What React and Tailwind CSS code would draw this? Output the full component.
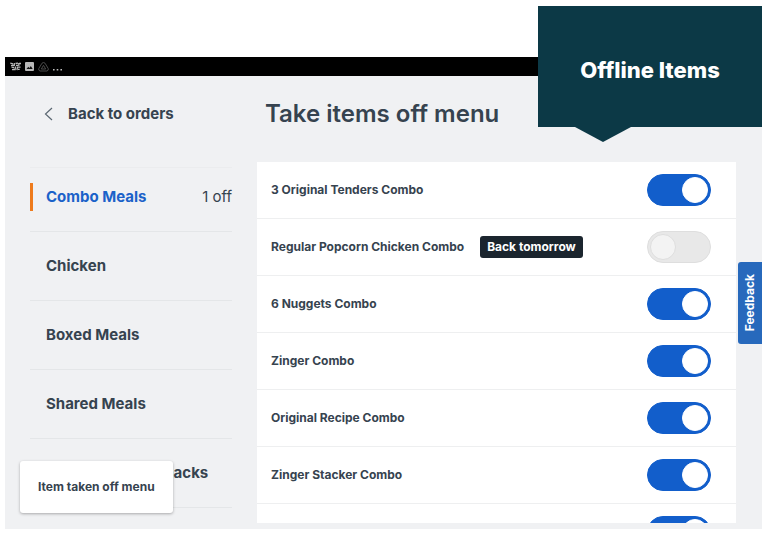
import React, { useState } from "react";

const categories = [
  { name: "Combo Meals", off: 1 },
  { name: "Chicken" },
  { name: "Boxed Meals" },
  { name: "Shared Meals" },
  { name: "Popcorn & Hot Snacks" },
];

const menuItems = [
  { id: 1, name: "3 Original Tenders Combo", available: true },
  { id: 2, name: "Regular Popcorn Chicken Combo", available: false, note: "Back tomorrow" },
  { id: 3, name: "6 Nuggets Combo", available: true },
  { id: 4, name: "Zinger Combo", available: true },
  { id: 5, name: "Original Recipe Combo", available: true },
  { id: 6, name: "Zinger Stacker Combo", available: true },
  { id: 7, name: "Zinger Box Combo", available: true },
];

/* ---------------- STATUS BAR ---------------- */

function StatusBar() {
  return (
    <div className="flex h-[19px] shrink-0 items-center gap-1 bg-black px-[5px] text-[#b9b9b9]">
      <svg width="11" height="9" viewBox="0 0 11 9" fill="none" stroke="currentColor" strokeWidth="1.300">
        <path d="M.3 1.200l2.700.6M1 3.600l2.600-.4M4.300 1v3M5.500 1.500l2.500-.3M6 3.300h2M8.800 1v3M9 1.500h2M1.500 5.200l2.600.3M2 7.700l2.400-.3M5.500 4.500L5 8.200M7.500 4.500L7 8.200M8 5.200h2.500M8 7.400h1.700" />
      </svg>
      <svg width="9" height="9" viewBox="0 0 9 9">
        <rect width="9" height="9" rx="1" fill="currentColor" />
        <path d="M1.500 7l1.800-2.300 1.200 1.300 1.300-1.900L7.700 7z" fill="#111" />
      </svg>
      <svg width="11" height="10" viewBox="0 0 11 10" fill="none" stroke="#4a4a4a">
        <path d="M4 1.200Q5.500-.2 7 1.200L10.200 6.500Q10.800 8.500 9 9H2Q.2 8.500.8 6.500z" />
        <path d="M5.500 3.300L3.300 7h4.400z" />
      </svg>
      <svg width="10" height="9" viewBox="0 0 10 9" fill="currentColor">
        <path d="M0 7h1.600v1.400H0zM3.700 7h1.600v1.400H3.700zM7.400 7H9v1.400H7.400z" />
      </svg>
    </div>
  );
}

/* ---------------- SIDEBAR ---------------- */

function Sidebar({ active, onSelect }) {
  return (
    <nav className="flex w-[252px] shrink-0 flex-col pr-[25px] pl-[25px]">
      <a
        href="#orders"
        className="flex h-[76px] items-center gap-[15px] pl-[14px] text-[15px] font-bold"
      >
        <svg width="9" height="14" viewBox="0 0 9 14" fill="none" stroke="#5c6872" strokeWidth="1.200">
          <path d="M8 1L1.500 7 8 13" />
        </svg>
        Back to orders
      </a>

      <ul className="mt-[15px] border-t border-[#ebecee]">
        {categories.map((cat, i) => (
          <li
            key={cat.name}
            className={`border-b border-[#e4e6e8] ${i === 0 ? "h-16 pb-[5px]" : "h-[69px]"}`}
          >
            <button
              onClick={() => onSelect(cat.name)}
              className="flex h-full w-full items-center text-left text-[15px] whitespace-nowrap"
            >
              <span
                className={`mr-[13px] h-7 w-[3px] ${active === cat.name ? "bg-[#ee7b1c]" : ""}`}
              />
              <span
                className={`flex-1 font-bold ${active === cat.name ? "text-[#1b62c9]" : ""}`}
              >
                {cat.name}
              </span>
              {cat.off && <span>{cat.off} off</span>}
            </button>
          </li>
        ))}
      </ul>
    </nav>
  );
}

/* ---------------- MENU ROW ---------------- */

function MenuRow({ item, onToggle }) {
  return (
    <li className="flex h-[57px] items-center border-b border-[#eeeff0] pr-[25px] pl-[14px] text-xs font-bold">
      <label htmlFor={`item-${item.id}`}>{item.name}</label>
      {item.note && (
        <span className="ml-4 rounded-[3px] bg-[#1b252e] px-[7px] leading-[22px] text-white">
          {item.note}
        </span>
      )}
      <input
        id={`item-${item.id}`}
        type="checkbox"
        role="switch"
        checked={item.available}
        onChange={() => onToggle(item.id)}
        className="ml-auto flex h-8 w-16 shrink-0 cursor-pointer appearance-none items-center rounded-full border border-[#dedede] bg-[#e8e8e8] px-[2px] before:size-[26px] before:rounded-full before:border before:border-[#dedede] before:bg-[#f3f3f3] checked:justify-end checked:border-[#125ecb] checked:bg-[#125ecb] checked:before:border-white checked:before:bg-white"
      />
    </li>
  );
}

function App() {
  const [active, setActive] = useState("Combo Meals");
  const [items, setItems] = useState(menuItems);

  const toggleItem = (id) => {
    setItems((prev) =>
      prev.map((it) => (it.id === id ? { ...it, available: !it.available } : it))
    );
  };

  return (
    <div className="relative flex h-screen flex-col bg-white pt-[57px] pr-[6px] pb-2 pl-[5px] font-['Inter',sans-serif] text-[#36434f]">
      <div className="relative flex min-h-0 flex-1 flex-col overflow-hidden bg-[#f0f1f3]">
        <StatusBar />

        <div className="flex min-h-0 flex-1">
          <Sidebar active={active} onSelect={setActive} />

          <main className="flex min-w-0 flex-1 flex-col pr-[26px] pb-[6px]">
            <h1 className="flex h-[86px] shrink-0 items-center pb-[10px] pl-2 text-2xl font-semibold whitespace-nowrap">
              Take items off menu
            </h1>
            <ul className="min-h-0 flex-1 overflow-hidden bg-white">
              {items.map((item) => (
                <MenuRow key={item.id} item={item} onToggle={toggleItem} />
              ))}
            </ul>
          </main>
        </div>

        {/* Toast */}
        <div
          role="status"
          className="absolute bottom-4 left-[15px] rounded-[3px] bg-white px-[18px] text-xs leading-[52px] font-bold whitespace-nowrap shadow-[0_1px_3px_rgba(0,0,0,0.3)]"
        >
          Item taken off menu
        </div>

        {/* Feedback tab */}
        <button className="absolute top-[205px] right-0 flex h-[82px] w-6 items-center justify-center rounded-l-[3px] bg-[#2769bc] text-xs font-bold text-white">
          <span className="rotate-180 [writing-mode:vertical-rl]">Feedback</span>
        </button>
      </div>

      {/* Callout */}
      <div className="absolute top-[6px] right-[6px] flex h-[121px] w-[224px] items-center justify-center bg-[#0c3946] pt-2 text-[22px] font-extrabold text-white">
        Offline Items
        <svg width="56" height="16" viewBox="0 0 56 16" className="absolute top-full left-[37px]">
          <path d="M0 0h56L28 15z" fill="#0c3946" />
        </svg>
      </div>
    </div>
  );
}

export default App;
